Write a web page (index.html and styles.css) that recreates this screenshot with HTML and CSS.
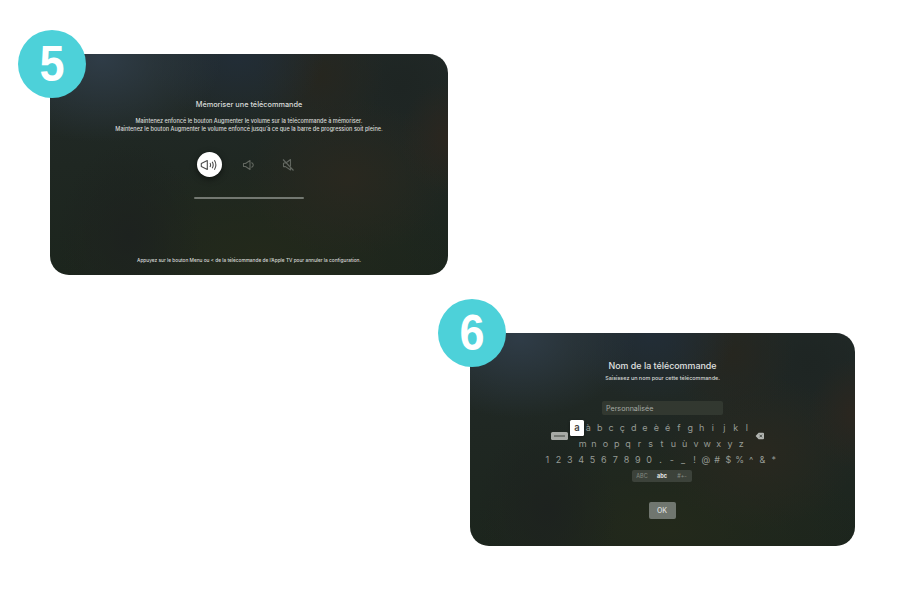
FILE: index.html
```html
<!DOCTYPE html>
<html lang="fr">
<head>
<meta charset="utf-8">
<title>Télécommande Apple TV</title>
<link rel="stylesheet" href="styles.css">
</head>
<body>
<main class="steps">
  <section class="step step-learn">
    <div class="badge"><span>5</span></div>
    <div class="screen">
      <h2 class="title learn-title">Mémoriser une télécommande</h2>
      <div class="instructions">
        <p class="line-one">Maintenez enfoncé le bouton Augmenter le volume sur la télécommande à mémoriser.</p>
        <p class="line-two">Maintenez le bouton Augmenter le volume enfoncé jusqu’à ce que la barre de progression soit pleine.</p>
      </div>
      <div class="volume">
        <div class="vol active">
          <svg width="18" height="14" viewBox="0 0 18 14"><path d="M1.300 5.400v3.200l6 2.900v-9z"/><path d="M10 5q1.200 2 0 4M12.200 3.700q2 3.300 0 6.600M14.400 2.300q3 4.700 0 9.400"/></svg>
        </div>
        <div class="vol">
          <svg width="14" height="12" viewBox="0 0 14 12"><path d="M1.500 4.500v3h2L8 10.500v-9L3.500 4.500zM9.500 3.500q3.600 2.500 0 5"/></svg>
        </div>
        <div class="vol">
          <svg width="14" height="14" viewBox="0 0 14 14"><path d="M2 1.500l10.500 11M2.500 5v3.600h2L9.500 12V8.800M5.500 4.500L9.500 1.500v6.800M2.500 5h2.600"/></svg>
        </div>
      </div>
      <div class="progress"></div>
      <p class="footnote">Appuyez sur le bouton Menu ou &lt; de la télécommande de l’Apple TV pour annuler la configuration.</p>
    </div>
  </section>

  <section class="step step-name">
    <div class="badge"><span>6</span></div>
    <div class="screen">
      <h2 class="title name-title">Nom de la télécommande</h2>
      <p class="subtitle">Saisissez un nom pour cette télécommande.</p>
      <div class="field">Personnalisée</div>
      <div class="keyboard">
        <div class="space-key"><i></i></div>
        <div class="letters">
          <div class="keys"><b>a</b><span>à</span><span>b</span><span>c</span><span>ç</span><span>d</span><span>e</span><span>è</span><span>é</span><span>f</span><span>g</span><span>h</span><span>i</span><span>j</span><span>k</span><span>l</span></div>
          <div class="keys"><span>m</span><span>n</span><span>o</span><span>p</span><span>q</span><span>r</span><span>s</span><span>t</span><span>u</span><span>ù</span><span>v</span><span>w</span><span>x</span><span>y</span><span>z</span></div>
        </div>
        <svg class="delete-key" width="10" height="8" viewBox="0 0 10 8"><path class="shape" d="M3.600.800H8q1 0 1 1v4.400q0 1-1 1H3.600L.600 4z"/><path class="cross" d="M4.500 2.700l2.600 2.600M7.100 2.700L4.500 5.300"/></svg>
      </div>
      <div class="keys symbols"><span>1</span><span>2</span><span>3</span><span>4</span><span>5</span><span>6</span><span>7</span><span>8</span><span>9</span><span>0</span><span>.</span><span>-</span><span>_</span><span>!</span><span>@</span><span>#</span><span>$</span><span>%</span><span>^</span><span>&amp;</span><span>*</span></div>
      <div class="modes"><span>ABC</span><span class="selected">abc</span><span>#+-</span></div>
      <div class="ok">OK</div>
    </div>
  </section>
</main>
</body>
</html>
```
FILE: styles.css
```css
* { box-sizing: border-box; }
body, h2, p { margin: 0; }
body {
  width: 900px;
  height: 600px;
  overflow: hidden;
  background: #fff;
  font-family: Inter, "Liberation Sans", sans-serif;
}
.steps {
  display: flex;
  flex-direction: column;
  padding: 54px 0 0 50px;
  gap: 58px;
}
.step { position: relative; }
.step-learn { width: 398px; }
.step-name { width: 385px; margin-left: 420px; }
.badge {
  position: absolute;
  z-index: 1;
  left: -32px;
  top: -24px;
  width: 68px;
  height: 68px;
  border-radius: 50%;
  background: #4dd1d9;
  color: #fff;
  display: flex;
  align-items: center;
  justify-content: center;
  font: bold 50px/68px "Liberation Sans", sans-serif;
}
.step-name .badge { top: -34px; }
.badge span { transform: scaleX(.9); }
.screen {
  display: flex;
  flex-direction: column;
  align-items: center;
  border-radius: 19px;
  overflow: hidden;
  color: #d8dad8;
  white-space: nowrap;
  background:
    radial-gradient(ellipse 30% 38% at 13% 2%, #2f3c47, #2f3c4700),
    radial-gradient(ellipse 22% 32% at 47% 0%, #222d37, #222d3700),
    radial-gradient(ellipse 16% 32% at 68% 10%, #26261f, #26261f00),
    radial-gradient(ellipse 12% 26% at 100% 38%, #2b261f, #2b261f00),
    radial-gradient(ellipse 26% 36% at 75% 56%, #29281f, #29281f00),
    radial-gradient(ellipse 18% 42% at 20% 82%, #1d221f, #1d221f00),
    radial-gradient(ellipse 50% 45% at 52% 92%, #23291b, #23291b00),
    radial-gradient(ellipse 24% 45% at 88% 15%, #1e2523, #1e252300),
    linear-gradient(#222a29, #1f2722 50%, #1c251d);
}
.step-learn .screen { height: 221px; padding-top: 46px; }
.step-name .screen { height: 213px; padding-top: 28px; }
.title { font-weight: 500; line-height: 10px; }
.learn-title { font-size: 7.320px; }
.instructions {
  margin-top: 8px;
  font-size: 5.540px;
  font-weight: 500;
  line-height: 7.5px;
  text-align: center;
}
.volume { display: flex; gap: 14.500px; margin-top: 19px; padding-right: 1px; }
.vol {
  width: 25px;
  height: 25px;
  border-radius: 50%;
  display: flex;
  align-items: center;
  justify-content: center;
}
.vol svg { flex: none; fill: none; stroke: #626760; stroke-width: 1.100; stroke-linejoin: round; }
.vol.active { background: #fff; box-shadow: 0 2px 6px #0008; }
.vol.active svg { stroke: #4b4b4b; }
.progress {
  width: 110px;
  height: 2px;
  margin-top: 20px;
  border-radius: 1px;
  background: #737871;
}
.footnote { margin-top: 57px; font-size: 4.780px; font-weight: 500; line-height: 8px; }
.name-title { font-size: 8.880px; color: #e0e2e1; }
.subtitle { margin-top: 3px; font-size: 5.450px; font-weight: 500; line-height: 8px; }
.field {
  width: 121px;
  height: 14px;
  margin-top: 19px;
  padding-left: 4px;
  border-radius: 2px;
  background: #323830;
  color: #a5aaa4;
  font-size: 7.150px;
  line-height: 15px;
}
.keyboard {
  display: flex;
  align-items: center;
  height: 31px;
  margin: 5px 9px 0 0;
}
.space-key {
  width: 17px;
  height: 8px;
  margin-right: 2px;
  border-radius: 1.500px;
  background: #a7aaa6;
  display: flex;
  align-items: center;
  justify-content: center;
}
.space-key i { width: 11px; height: 2px; background: #747873; }
.letters { width: 184px; }
.keys {
  display: flex;
  justify-content: center;
  height: 15.500px;
  align-items: center;
  font-size: 9px;
  line-height: 15px;
  color: #969b95;
}
.keys span, .keys b { width: 11.330px; text-align: center; flex: none; }
.keys b {
  width: 13.300px;
  height: 16px;
  margin: 0 -1px;
  border-radius: 1.500px;
  background: #fff;
  color: #444;
  font-weight: 600;
  font-size: 9.500px;
  line-height: 15px;
  box-shadow: 0 1px 3px #0006;
}
.delete-key { margin-left: 1px; }
.delete-key .shape { fill: #b2b5b1; }
.delete-key .cross { stroke: #3b403a; stroke-width: .900; }
.symbols { height: 16px; margin-right: 4px; }
.modes {
  width: 60px;
  height: 12px;
  margin: 3px 1px 0 0;
  border-radius: 2px;
  background: #3c423a;
  display: grid;
  grid-template-columns: repeat(3, 1fr);
  text-align: center;
  font-size: 5.500px;
  line-height: 12px;
  color: #858a83;
}
.modes .selected { color: #e6e8e6; font-weight: 700; }
.ok {
  width: 27px;
  height: 17px;
  margin: 20px 1px 0 0;
  border-radius: 2px;
  background: #70766f;
  color: #dcdedb;
  font-size: 7px;
  font-weight: 500;
  line-height: 17px;
  text-align: center;
}
```
